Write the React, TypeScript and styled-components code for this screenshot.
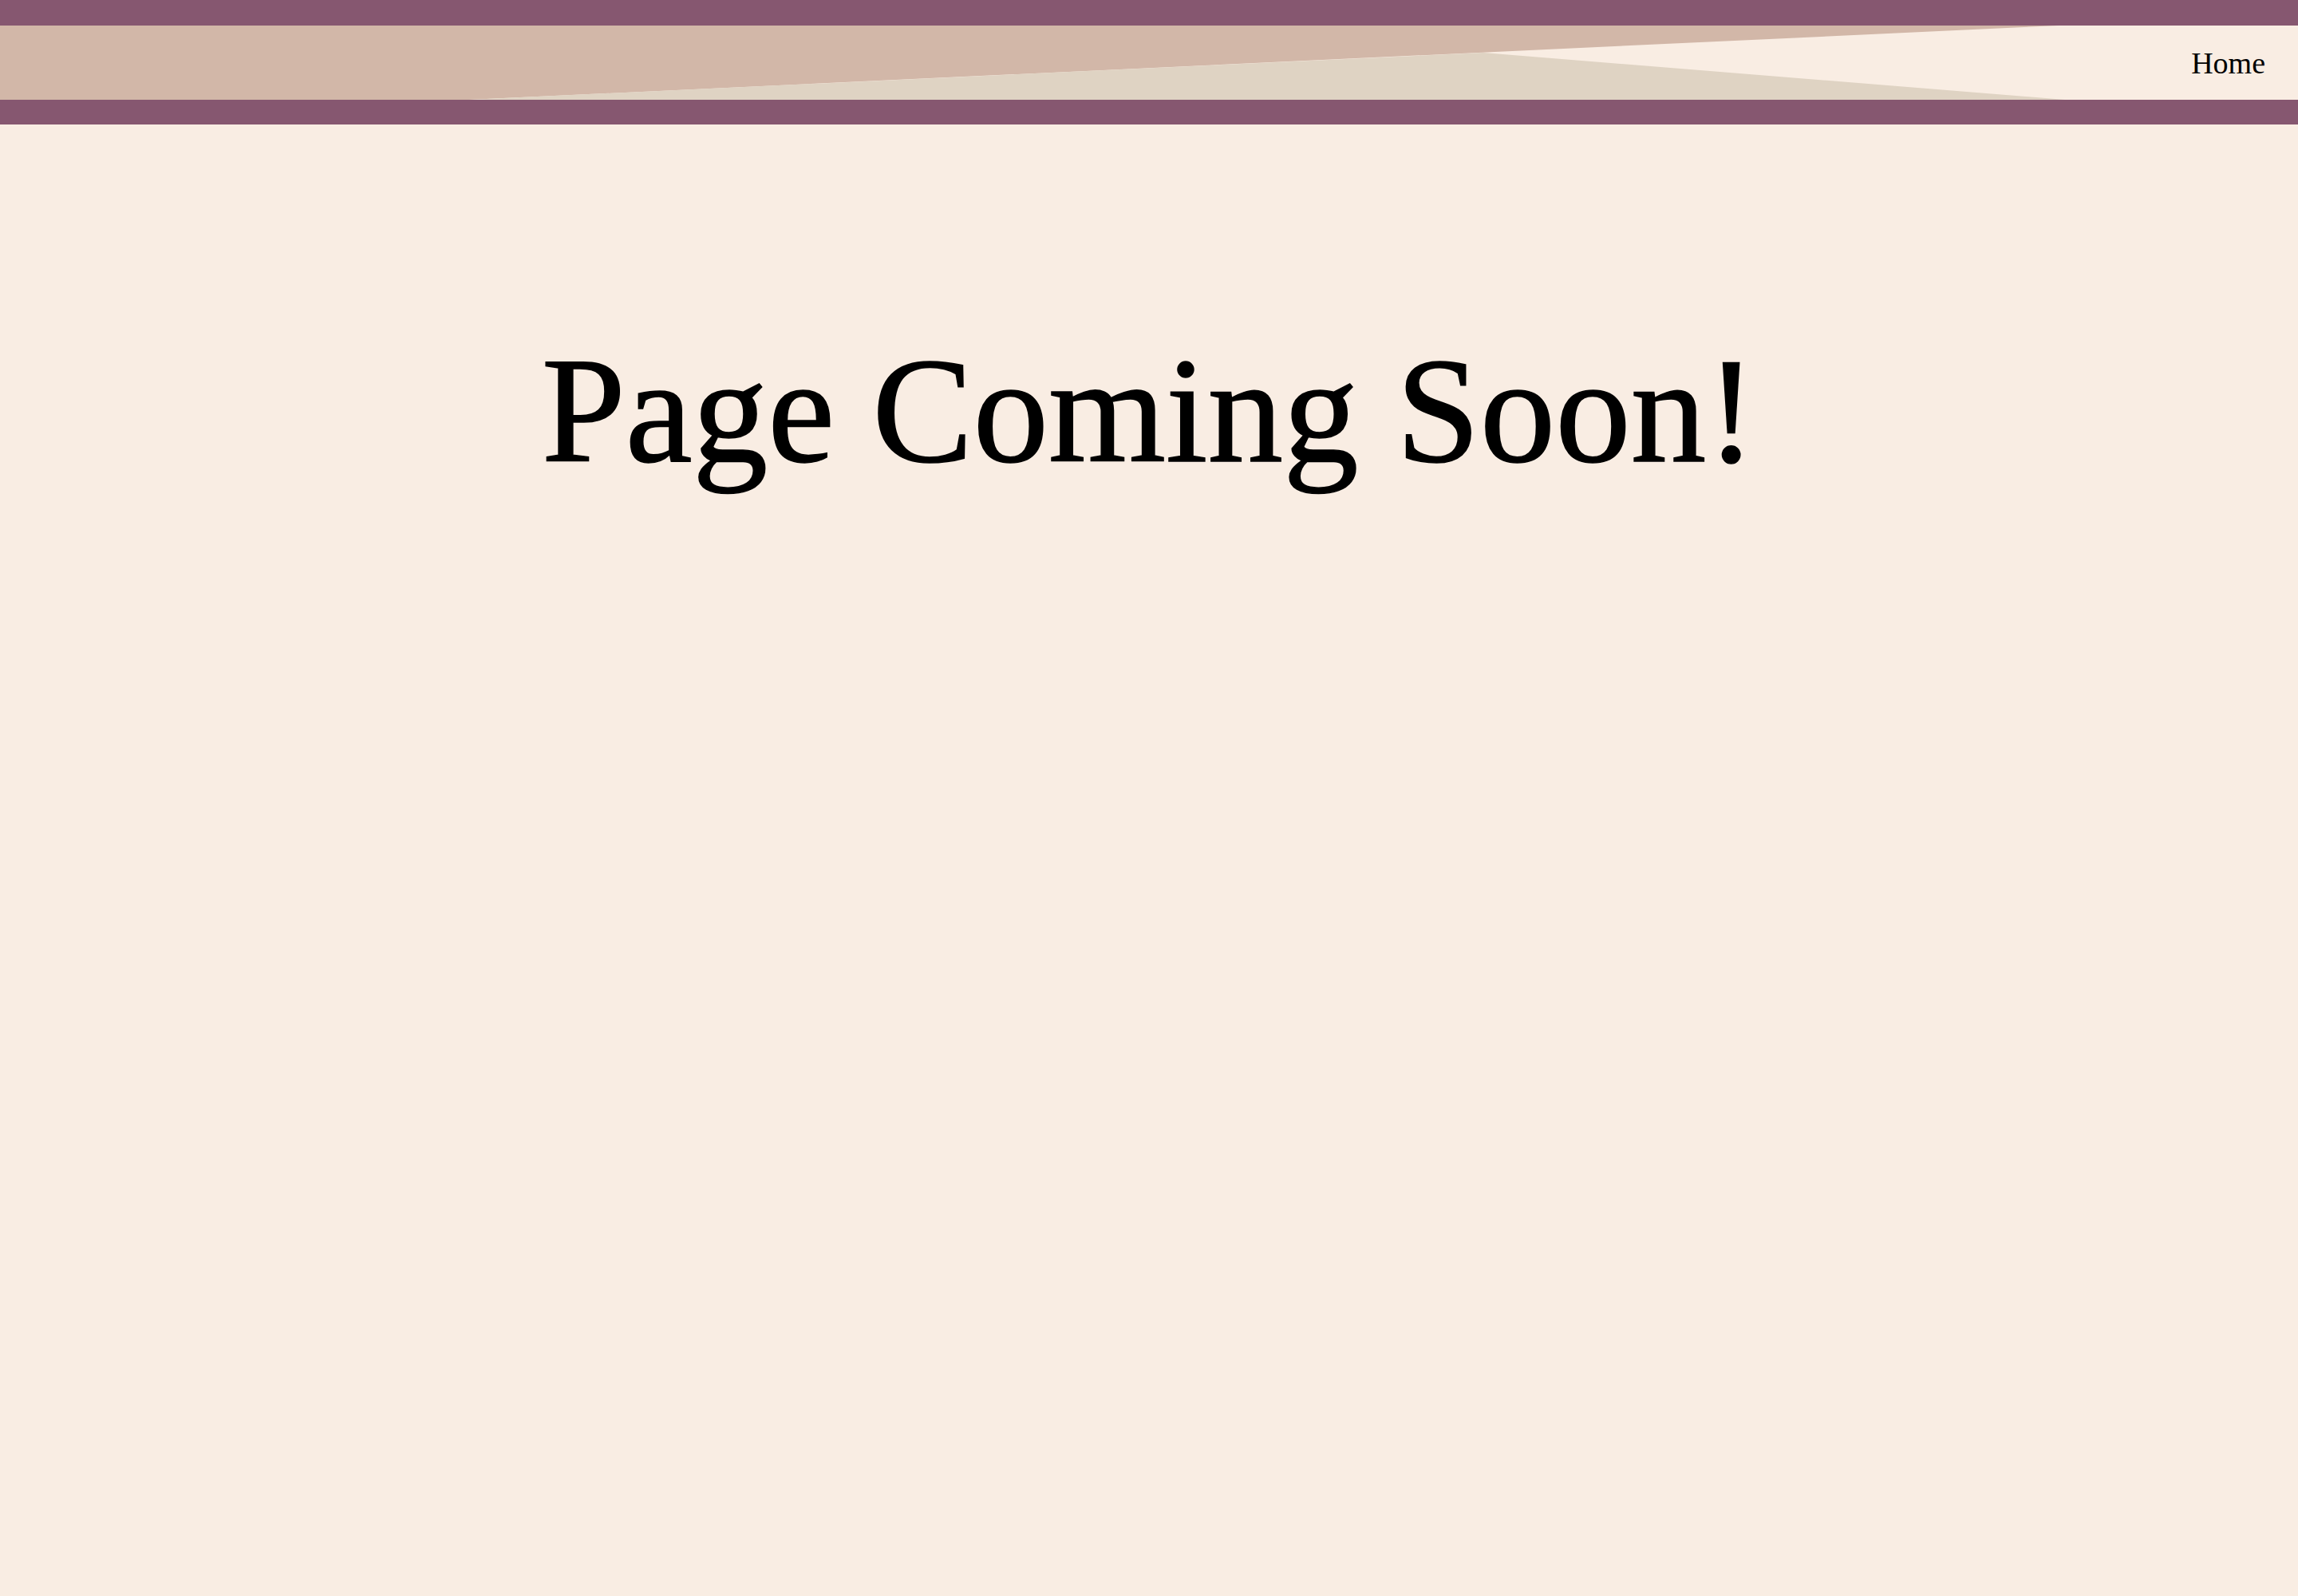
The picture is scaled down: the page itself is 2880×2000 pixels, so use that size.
import React from "react";
import styled, { createGlobalStyle } from "styled-components";

const GlobalStyle = createGlobalStyle`
  html, body {
    margin: 0;
    padding: 0;
    background: #f9ede3;
  }
  body {
    font-family: "Liberation Serif", "Times New Roman", serif;
    color: #000;
  }
`;

const Page = styled.div`
  min-height: 2000px;
  background: #f9ede3;
  display: flex;
  flex-direction: column;
`;

const Header = styled.header`
  display: flex;
  flex-direction: column;
`;

const Bar = styled.div<{ $h: number }>`
  height: ${(p) => p.$h}px;
  background: #865770;
`;

const Band = styled.div`
  position: relative;
  height: 93px;
  background: #f9ede3;
  display: flex;
  align-items: center;
  justify-content: flex-end;
  padding-right: 41px;
  overflow: hidden;
`;

const BandArt = styled.svg`
  position: absolute;
  inset: 0;
  width: 100%;
  height: 100%;
  display: block;
`;

const Nav = styled.nav`
  position: relative;
  display: flex;
  gap: 32px;
`;

const NavLink = styled.a`
  font-family: "Liberation Serif", "Times New Roman", serif;
  font-size: 38px;
  line-height: 1;
  color: #000;
  text-decoration: none;
`;

const Main = styled.main`
  display: flex;
  justify-content: center;
  padding-top: 264px;
`;

const Title = styled.h1`
  margin: 0;
  font-family: "Liberation Serif", "Times New Roman", serif;
  font-weight: 400;
  font-size: 189px;
  line-height: 1;
  color: #000;
  text-align: center;
  -webkit-text-stroke: 1.5px #000;
`;

export default function App() {
  return (
    <Page>
      <GlobalStyle />
      <Header>
        <Bar $h={32} />
        <Band>
          <BandArt viewBox="0 0 2880 93" preserveAspectRatio="none" aria-hidden="true">
            <polygon points="0,0 2580,0 588,93 0,93" fill="#d2b7a8" />
            <polygon points="588,93 1859,34 2588,93" fill="#dfd3c3" />
          </BandArt>
          <Nav>
            <NavLink href="#">Home</NavLink>
          </Nav>
        </Band>
        <Bar $h={31} />
      </Header>
      <Main>
        <Title>Page Coming Soon!</Title>
      </Main>
    </Page>
  );
}
